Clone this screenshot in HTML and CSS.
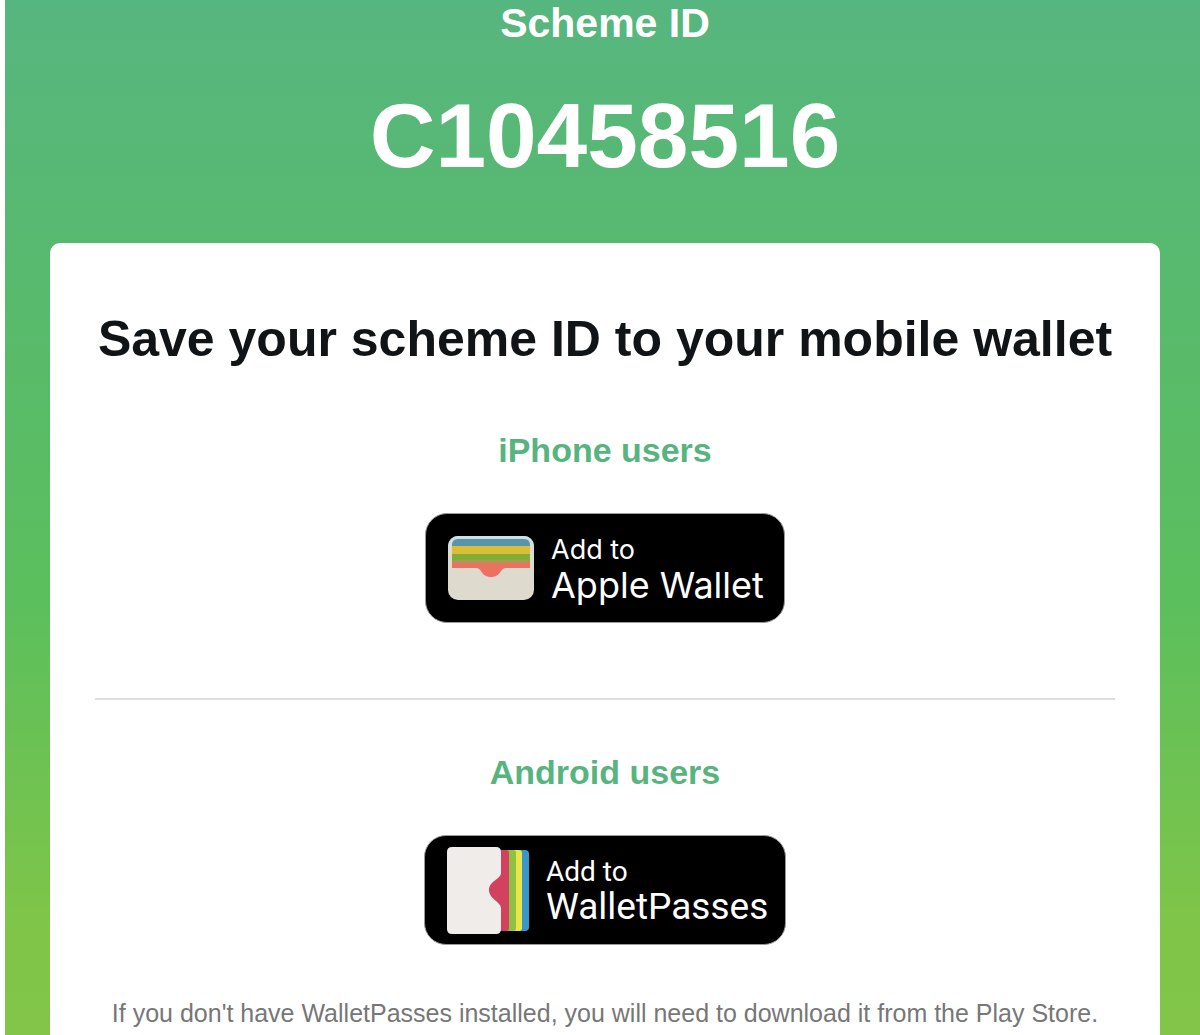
FILE: index.html
```html
<!DOCTYPE html>
<html lang="en">
<head>
<meta charset="utf-8">
<meta name="viewport" content="width=device-width, initial-scale=1">
<title>Scheme ID</title>
<link rel="stylesheet" href="styles.css">
</head>
<body>
<main class="panel">
  <header class="scheme">
    <p class="scheme-label">Scheme ID</p>
    <p class="scheme-id">C10458516</p>
  </header>
  <section class="card">
    <h1 class="card-title">Save your scheme ID to your mobile wallet</h1>
    <div class="platform">
      <h2 class="platform-title">iPhone users</h2>
      <a class="badge badge-apple" href="#apple-wallet">
        <svg class="badge-icon" width="86" height="64" viewBox="0 0 86 64" aria-hidden="true">
          <rect width="86" height="64" rx="10" fill="#dedacd"/>
          <path d="M1 12V10a9 9 0 0 1 9-9h66a9 9 0 0 1 9 9v2" fill="none" stroke="#c9e3ec" stroke-width="2"/>
          <path d="M4 9q0-6 6-6h66q6 0 6 6v4H4z" fill="#5795ad"/>
          <path d="M4 10h78v10H4z" fill="#dbbd38"/>
          <path d="M4 18h78v7H4z" fill="#80ad35"/>
          <path d="M4 24h78v4H4z" fill="#a99a52"/>
          <path d="M4 27h78v5H58c-6 0-5 9-15 9s-9-9-15-9H4z" fill="#ed7161"/>
        </svg>
        <span class="badge-text"><span class="badge-small">Add to</span><span class="badge-large">Apple Wallet</span></span>
      </a>
    </div>
    <hr class="divider">
    <div class="platform">
      <h2 class="platform-title">Android users</h2>
      <a class="badge badge-android" href="#walletpasses">
        <svg class="badge-icon" width="82" height="87" viewBox="0 0 82 87" aria-hidden="true">
          <rect x="50" y="3" width="32" height="81" rx="4" fill="#3b96c8"/>
          <rect x="50" y="3" width="25" height="81" rx="3" fill="#e9e64b"/>
          <rect x="50" y="3" width="19" height="81" rx="3" fill="#8fc044"/>
          <rect x="40" y="3" width="22" height="81" rx="3" fill="#d2425f"/>
          <path d="M5 0h44q5 0 5 5v21c0 6-12 8-12 17s12 12 12 18v21q0 5-5 5H5q-5 0-5-5V5q0-5 5-5z" fill="#efecea"/>
        </svg>
        <span class="badge-text"><span class="badge-small">Add to</span><span class="badge-large">WalletPasses</span></span>
      </a>
      <p class="note">If you don't have WalletPasses installed, you will need to download it from the Play Store.</p>
    </div>
  </section>
</main>
</body>
</html>
```
FILE: styles.css
```css
* {
  box-sizing: border-box;
}

body {
  margin: 0;
  background: #fff;
  font-family: "Liberation Sans", Arial, sans-serif;
}

h1, h2, p {
  margin: 0;
}

.panel {
  display: flex;
  flex-direction: column;
  min-height: 100vh;
  margin-left: 5px;
  padding: 0 40px 0 45px;
  background: linear-gradient(#56b67f 0%, #58ba6c 30%, #5bbf5d 58%, #80c548 90%, #82c548 100%);
}

.scheme {
  color: #fff;
  font-weight: bold;
  text-align: center;
}

.scheme-label {
  font-size: 41px;
  line-height: 46px;
}

.scheme-id {
  padding: 40px 0 57px;
  font-size: 91px;
  line-height: 100px;
}

.card {
  flex: 1;
  padding: 67px 45px 0;
  border-radius: 10px 10px 0 0;
  background: #fff;
  text-align: center;
}

.card-title {
  margin: 0 -20px 62px;
  color: #111417;
  font-size: 50px;
  line-height: 58px;
}

.platform {
  display: flex;
  flex-direction: column;
  align-items: center;
}

.platform-title {
  margin-bottom: 43px;
  color: #57b47f;
  font-size: 34px;
  line-height: 40px;
}

.badge {
  display: flex;
  align-items: center;
  height: 110px;
  padding: 0 22px;
  border: 1px solid #999;
  border-radius: 22px;
  background: #000;
  color: #fff;
  text-align: left;
  text-decoration: none;
  white-space: nowrap;
}

.badge-apple {
  width: 360px;
  gap: 17px;
  font-family: Inter, sans-serif;
}

.badge-android {
  width: 362px;
  gap: 17px;
  font-family: Roboto, sans-serif;
}

.badge-icon {
  flex: none;
}

.badge-text {
  display: flex;
  flex-direction: column;
}

.badge-small {
  font-size: 27px;
  line-height: 34px;
}

.badge-large {
  font-size: 36px;
  line-height: 36px;
}

.badge-android .badge-small {
  font-size: 28px;
}

.badge-android .badge-large {
  font-size: 37px;
}

.divider {
  height: 2px;
  margin: 75px 0 52px;
  border: 0;
  background: #dedede;
}

.note {
  margin: 52px -20px 0;
  color: #777;
  font-size: 25px;
  line-height: 32px;
}
```
